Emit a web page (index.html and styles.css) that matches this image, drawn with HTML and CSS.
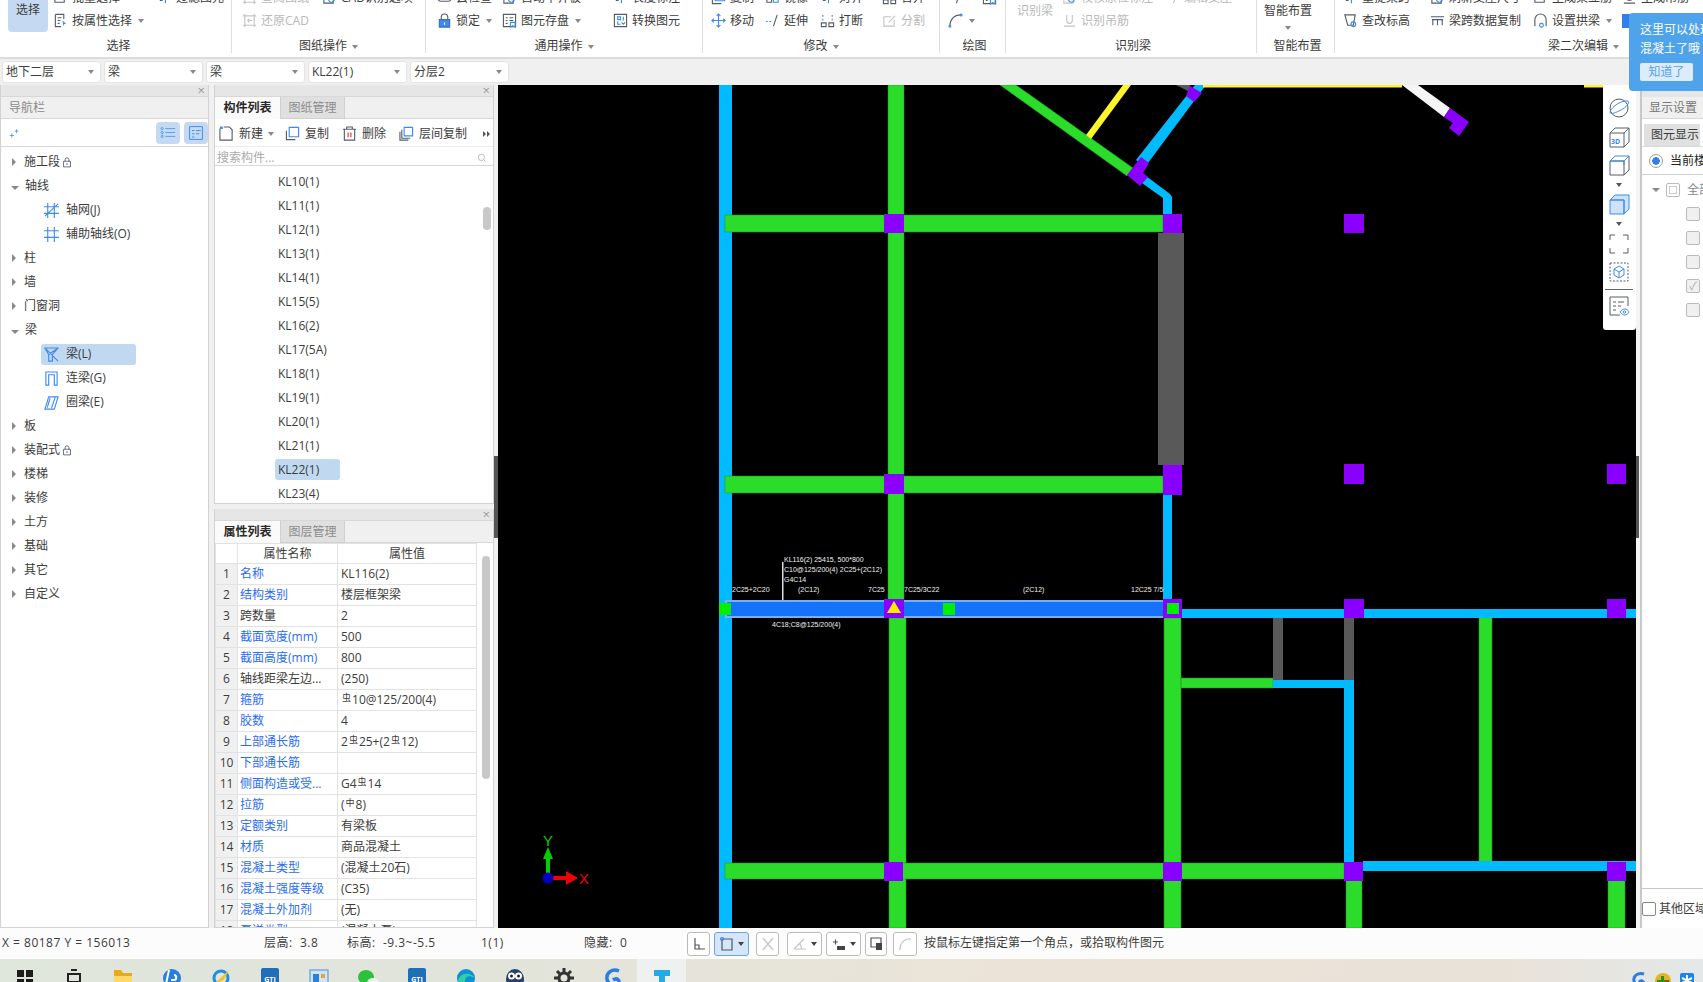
FILE: index.html
```html
<!DOCTYPE html>
<html lang="zh-CN">
  <head>
    <meta charset="UTF-8" />
    <title>梁二次编辑</title>
    <link rel="stylesheet" href="styles.css">
  </head>
  <body>
    <!-- iconos -->
    <svg class="defs" width="0" height="0">
      <symbol id="i-prop" viewBox="0 0 16 16"><path d="M2.5 1.5h9v5M2.5 1.5v13h6M5 5h4M5 8h3M5 11h2"/><path class="blue" d="M10 8l4 3.5-2 .3-.8 2.2z"/></symbol>
      <symbol id="i-batch" viewBox="0 0 16 16"><path d="M2 3h10v10H2z"/><path class="sb" d="M5 8l2 2 4-5"/></symbol>
      <symbol id="i-filter" viewBox="0 0 16 16"><path d="M3 3h3M3 7h3M3 11h3"/><path class="sb" d="M9 2v12"/></symbol>
      <symbol id="i-cad" viewBox="0 0 16 16"><path d="M3 1v14M13 1v14M1 3h14M1 13h14M8 6l-2 2 2 2M6 8h5"/></symbol>
      <symbol id="i-search" viewBox="0 0 16 16"><path d="M2 2h10v12H2z"/><circle class="sb" cx="10" cy="10" r="3"/></symbol>
      <symbol id="i-lock" viewBox="0 0 16 16"><path d="M4.5 7V4.5a3.5 3.5 0 0 1 7 0V7"/><path class="fillb" d="M2.5 7h11v8h-11z"/><path class="wh" d="M8 10v2.5"/></symbol>
      <symbol id="i-save" viewBox="0 0 16 16"><path d="M1.5 1.5h13v13h-13zM4 5h2M8 5h4M4 8h2M8 8h4M4 11h2"/><path class="sb" d="M9 10h5v5l-2.500-1.500L9 15z"/></symbol>
      <symbol id="i-conv" viewBox="0 0 16 16"><path d="M1.500 1.500h13v13h-13z"/><path class="sb" d="M5 4h3v3H5zM8 12H5V9M11 4v4M9 10l2 2 2-2"/></symbol>
      <symbol id="i-cloud" viewBox="0 0 16 16"><path d="M4 12a3 3 0 0 1 0-6 4 4 0 0 1 8 0 3 3 0 0 1 0 6z"/></symbol>
      <symbol id="i-move" viewBox="0 0 16 16"><path class="sb" d="M8 1v14M1 8h14M6 3l2-2 2 2M6 13l2 2 2-2M3 6L1 8l2 2M13 6l2 2-2 2"/></symbol>
      <symbol id="i-extend" viewBox="0 0 16 16"><path class="sb" stroke-dasharray="2 1.500" d="M1 9h7"/><path d="M9 14L13 2"/></symbol>
      <symbol id="i-break" viewBox="0 0 16 16"><path class="sb" d="M3 2v2M3 6v2M13 2v2M13 6v2"/><path d="M1.500 10.500h5v4h-5zM9.500 10.500h5v4h-5z"/></symbol>
      <symbol id="i-split" viewBox="0 0 16 16"><path d="M2 4h8M2 4v10h11V7M7 10l7-7"/></symbol>
      <symbol id="i-mirror" viewBox="0 0 16 16"><path d="M2 3h5v10H2z"/><path class="sb" d="M9 3h5v10H9z"/></symbol>
      <symbol id="i-arc" viewBox="0 0 16 16"><path d="M2 14C2 7 6 2 14 2"/><circle class="sb" cx="2" cy="14" r="1"/><circle class="sb" cx="14" cy="2" r="1"/></symbol>
      <symbol id="i-level" viewBox="0 0 16 16"><path d="M2 2h11l-2 11H5z"/><circle class="sb" cx="11" cy="12" r="2.500"/></symbol>
      <symbol id="i-span" viewBox="0 0 16 16"><path d="M1 4h14M2 7h12M3 7v6M8 7v6M13 7v6"/></symbol>
      <symbol id="i-arch" viewBox="0 0 16 16"><path d="M2 14V7a6 6 0 0 1 12 0v7"/><circle class="sb" cx="9" cy="13" r="2"/></symbol>
      <symbol id="i-hang" viewBox="0 0 16 16"><path d="M5 2v6a3 3 0 0 0 6 0V2M2 14h12"/></symbol>
      <symbol id="i-new" viewBox="0 0 16 16"><path d="M1 3v12h13V4l-3-3H5"/><path class="sb" d="M1 1h3M1 3l3-2M1 1l3 2"/></symbol>
      <symbol id="i-copy" viewBox="0 0 16 16"><path d="M1.500 5v9.500H11"/><path class="sb" d="M4.500 1.500h10v10h-10z"/></symbol>
      <symbol id="i-del" viewBox="0 0 16 16"><path d="M1 3.500h14M5 3.500V1h6v2.500M2.500 3.500v11.500h11V3.500"/><path class="red" d="M6.500 7v5M9.500 7v5"/></symbol>
      <symbol id="i-floors" viewBox="0 0 16 16"><path d="M1 6v9h9M3 4v9h9"/><path class="sb" d="M5.500 1.500h9v9h-9z"/></symbol>
      <symbol id="i-grid" viewBox="0 0 16 16"><path class="sb" d="M4 0v16M11 0v16M0 4h16M0 11h16"/></symbol>
      <symbol id="i-gridx" viewBox="0 0 16 16"><path class="sb" d="M4 0v16M11 0v16M0 4h16M0 11h16M1 14L15 1"/></symbol>
      <symbol id="i-beam" viewBox="0 0 16 16"><path class="sb" d="M1 1h14L9 8v7H5V8zM1 1l14 14M15 1L5 8"/></symbol>
      <symbol id="i-link" viewBox="0 0 16 16"><path class="sb" d="M2 15V1h12v14h-3V4H5v11z"/></symbol>
      <symbol id="i-ring" viewBox="0 0 16 16"><path class="sb" d="M1 15L5 2h10l-4 13zM3.500 13.500L6.500 3.500M8 14l4-12"/></symbol>
      <symbol id="i-lst" viewBox="0 0 24 20"><circle class="sb" cx="3" cy="4" r="1.700"/><circle class="sb" cx="3" cy="10" r="1.700"/><circle class="sb" cx="3" cy="16" r="1.700"/><path class="sb" d="M8 4h15M8 10h15M8 16h15"/></symbol>
      <symbol id="i-lst2" viewBox="0 0 20 20"><path class="sb" d="M2 2h16v16H2zM5 7h3M10 7h6M5 11h3M10 11h4M5 15h3"/></symbol>
      <symbol id="i-mag" viewBox="0 0 16 16"><circle cx="7" cy="7" r="5"/><path d="M11 11l3 3"/></symbol>
      <symbol id="i-padlock" viewBox="0 0 16 16"><path d="M5 6V3.500a3 3 0 0 1 6 0V6M2.500 6h11v9h-11zM8 9v3"/></symbol>
      <symbol id="t-orbit" viewBox="0 0 22 22"><circle cx="11" cy="11" r="9"/><path class="sb" d="M2 15C4 9 14 3 20 4c2 1-1 6-7 9S2 18 2 15z"/></symbol>
      <symbol id="t-3d" viewBox="0 0 22 22"><path d="M2 7h14v14H2zM2 7l5-5h14v14l-5 5M16 7l5-5"/><text class="t3d" x="3" y="18">3D</text></symbol>
      <symbol id="t-cube" viewBox="0 0 22 22"><path d="M2 7h14v14H2zM16 21l5-5V2"/><path class="sb" d="M2 7l5-5h14l-5 5zM16 7v4"/></symbol>
      <symbol id="t-cubef" viewBox="0 0 22 22"><path class="fillc" d="M2 7h14v14H2zM2 7l5-5h14v14l-5 5V7z"/></symbol>
      <symbol id="t-frame" viewBox="0 0 22 22"><path d="M2 7V2h5M15 2h5v5M20 15v5h-5M7 20H2v-5"/></symbol>
      <symbol id="t-hex" viewBox="0 0 22 22"><path stroke-dasharray="2 1.500" d="M2 2h18v18H2z"/><path class="sb" d="M11 5l5 3v6l-5 3-5-3V8zM6 8l5 3 5-3M11 11v6"/></symbol>
      <symbol id="t-eye" viewBox="0 0 22 22"><path d="M20 11V2H2v18h10M5 7h3M10 7h6M5 11h3M10 11h3M5 15h3"/><path class="sb" d="M12 17c3-4 7-4 9 0-2 4-6 4-9 0z"/><circle class="sb" cx="16.500" cy="17" r="1.200"/></symbol>
    </svg>

    <div class="ribbon">
      <div class="rib-group g-select">
        <div class="rib-body">
          <div class="rib-big active">选择</div>
          <div class="rib-item"><svg class="ic"><use href="#i-batch" /></svg>批量选择</div>
          <div class="rib-item"><svg class="ic"><use href="#i-filter" /></svg>过滤图元</div>
          <div class="rib-item g1-prop"><svg class="ic"><use href="#i-prop" /></svg>按属性选择<i class="caret"></i></div>
        </div>
        <div class="rib-label">选择</div>
      </div>
      <div class="rib-group g-cad">
        <div class="rib-body">
          <div class="rib-item off"><svg class="ic"><use href="#i-cad" /></svg>查阅图纸</div>
          <div class="rib-item"><svg class="ic"><use href="#i-search" /></svg>CAD识别选项</div>
          <div class="rib-item off"><svg class="ic"><use href="#i-cad" /></svg>还原CAD</div>
        </div>
        <div class="rib-label">图纸操作<i class="caret"></i></div>
      </div>
      <div class="rib-group g-common">
        <div class="rib-body">
          <div class="rib-item"><svg class="ic"><use href="#i-cloud" /></svg>云检查</div>
          <div class="rib-item"><svg class="ic"><use href="#i-search" /></svg>自动平齐板</div>
          <div class="rib-item"><svg class="ic"><use href="#i-filter" /></svg>长度标注</div>
          <div class="rib-item"><svg class="ic"><use href="#i-lock" /></svg>锁定<i class="caret"></i></div>
          <div class="rib-item"><svg class="ic"><use href="#i-save" /></svg>图元存盘<i class="caret"></i></div>
          <div class="rib-item"><svg class="ic"><use href="#i-conv" /></svg>转换图元</div>
        </div>
        <div class="rib-label">通用操作<i class="caret"></i></div>
      </div>
      <div class="rib-group g-edit">
        <div class="rib-body">
          <div class="rib-item"><svg class="ic"><use href="#i-copy" /></svg>复制</div>
          <div class="rib-item"><svg class="ic"><use href="#i-mirror" /></svg>镜像</div>
          <div class="rib-item"><svg class="ic"><use href="#i-filter" /></svg>对齐</div>
          <div class="rib-item"><svg class="ic"><use href="#i-break" /></svg>合并</div>
          <div class="rib-item"><svg class="ic"><use href="#i-move" /></svg>移动</div>
          <div class="rib-item"><svg class="ic"><use href="#i-extend" /></svg>延伸</div>
          <div class="rib-item"><svg class="ic"><use href="#i-break" /></svg>打断</div>
          <div class="rib-item off"><svg class="ic"><use href="#i-split" /></svg>分割</div>
        </div>
        <div class="rib-label">修改<i class="caret"></i></div>
      </div>
      <div class="rib-group g-draw">
        <div class="rib-body">
          <div class="rib-item"><svg class="ic"><use href="#i-extend" /></svg></div>
          <div class="rib-item"><svg class="ic"><use href="#i-save" /></svg></div>
          <div class="rib-item"><svg class="ic"><use href="#i-arc" /></svg><i class="caret"></i></div>
        </div>
        <div class="rib-label">绘图</div>
      </div>
      <div class="rib-group g-recog">
        <div class="rib-body">
          <div class="rib-big off">识别梁</div>
          <div class="rib-item off"><svg class="ic"><use href="#i-search" /></svg>校核原位标注</div>
          <div class="rib-item off"><svg class="ic"><use href="#i-extend" /></svg>编辑支座</div>
          <div class="rib-item off g6-hang"><svg class="ic"><use href="#i-hang" /></svg>识别吊筋</div>
        </div>
        <div class="rib-label">识别梁</div>
      </div>
      <div class="rib-group g-smart">
        <div class="rib-body">
          <div class="rib-big smart">智能布置<i class="caret"></i></div>
        </div>
        <div class="rib-label">智能布置</div>
      </div>
      <div class="rib-group g-second">
        <div class="rib-body">
          <div class="rib-item"><svg class="ic"><use href="#i-filter" /></svg>重提梁跨</div>
          <div class="rib-item"><svg class="ic"><use href="#i-search" /></svg>刷新支座尺寸</div>
          <div class="rib-item"><svg class="ic"><use href="#i-batch" /></svg>生成架立筋</div>
          <div class="rib-item"><svg class="ic"><use href="#i-hang" /></svg>生成吊筋</div>
          <div class="rib-item"><svg class="ic"><use href="#i-level" /></svg>查改标高</div>
          <div class="rib-item"><svg class="ic"><use href="#i-span" /></svg>梁跨数据复制</div>
          <div class="rib-item"><svg class="ic"><use href="#i-arch" /></svg>设置拱梁<i class="caret"></i></div>
          <div class="rib-item"><span class="rib-check"></span></div>
        </div>
        <div class="rib-label">梁二次编辑<i class="caret"></i></div>
      </div>
    </div>

    <div class="combos">
      <div class="combo">地下二层<i class="caret"></i></div>
      <div class="combo">梁<i class="caret"></i></div>
      <div class="combo">梁<i class="caret"></i></div>
      <div class="combo">KL22(1)<i class="caret"></i></div>
      <div class="combo">分层2<i class="caret"></i></div>
    </div>

    <div class="main">
      <!-- navegacion -->
      <div class="nav">
        <div class="close-bar"><span class="close">×</span></div>
        <div class="nav-title">导航栏</div>
        <div class="nav-tools">
          <svg class="ic pin" viewBox="0 0 16 16"><path class="sb" d="M1 12h7M4.500 8.500v7M9 5h6M12 2v6" /></svg>
          <span class="nav-btn first"><svg class="ic-lst"><use href="#i-lst" /></svg></span>
          <span class="nav-btn"><svg class="ic-lst2"><use href="#i-lst2" /></svg></span>
        </div>
        <ul class="tree">
          <li><i class="tri"></i>施工段<svg class="ic-lock"><use href="#i-padlock" /></svg></li>
          <li><i class="tri down"></i>轴线</li>
          <li class="sub"><svg class="ic"><use href="#i-gridx" /></svg>轴网(J)</li>
          <li class="sub"><svg class="ic"><use href="#i-grid" /></svg>辅助轴线(O)</li>
          <li><i class="tri"></i>柱</li>
          <li><i class="tri"></i>墙</li>
          <li><i class="tri"></i>门窗洞</li>
          <li><i class="tri down"></i>梁</li>
          <li class="sub"><span class="sub-on"><svg class="ic"><use href="#i-beam" /></svg>梁(L)</span></li>
          <li class="sub"><svg class="ic"><use href="#i-link" /></svg>连梁(G)</li>
          <li class="sub"><svg class="ic"><use href="#i-ring" /></svg>圈梁(E)</li>
          <li><i class="tri"></i>板</li>
          <li><i class="tri"></i>装配式<svg class="ic-lock"><use href="#i-padlock" /></svg></li>
          <li><i class="tri"></i>楼梯</li>
          <li><i class="tri"></i>装修</li>
          <li><i class="tri"></i>土方</li>
          <li><i class="tri"></i>基础</li>
          <li><i class="tri"></i>其它</li>
          <li><i class="tri"></i>自定义</li>
        </ul>
      </div>

      <div class="mid">
        <!-- lista de componentes -->
        <div class="panel panel-list">
          <div class="close-bar"><span class="close">×</span></div>
          <div class="tabs">
            <div class="tab on">构件列表</div>
            <div class="tab">图纸管理</div>
          </div>
          <div class="list-tools">
            <span class="tool tool-new"><svg class="ic"><use href="#i-new" /></svg>新建<i class="caret"></i></span>
            <span class="tool tool-copy"><svg class="ic"><use href="#i-copy" /></svg>复制</span>
            <span class="tool tool-del"><svg class="ic"><use href="#i-del" /></svg>删除</span>
            <span class="tool tool-floor"><svg class="ic"><use href="#i-floors" /></svg>层间复制</span>
            <span class="tool-more"><i class="tri-more"></i><i class="tri-more"></i></span>
          </div>
          <div class="search">搜索构件...<svg class="ic-mag"><use href="#i-mag" /></svg></div>
          <ul class="list">
            <li><span>KL10(1)</span></li>
            <li><span>KL11(1)</span></li>
            <li><span>KL12(1)</span></li>
            <li><span>KL13(1)</span></li>
            <li><span>KL14(1)</span></li>
            <li><span>KL15(5)</span></li>
            <li><span>KL16(2)</span></li>
            <li><span>KL17(5A)</span></li>
            <li><span>KL18(1)</span></li>
            <li><span>KL19(1)</span></li>
            <li><span>KL20(1)</span></li>
            <li><span>KL21(1)</span></li>
            <li class="on"><span>KL22(1)</span></li>
            <li><span>KL23(4)</span></li>
          </ul>
          <div class="thumb thumb-list"></div>
        </div>

        <!-- propiedades -->
        <div class="panel panel-props">
          <div class="close-bar"><span class="close">×</span></div>
          <div class="tabs">
            <div class="tab on">属性列表</div>
            <div class="tab">图层管理</div>
          </div>
          <table class="props">
            <colgroup><col class="c-n" /><col class="c-k" /><col class="c-v" /></colgroup>
            <tr><th></th><th>属性名称</th><th>属性值</th></tr>
            <tr><th>1</th><td class="lnk">名称</td><td>KL116(2)</td></tr>
            <tr><th>2</th><td class="lnk">结构类别</td><td>楼层框架梁</td></tr>
            <tr><th>3</th><td>跨数量</td><td>2</td></tr>
            <tr><th>4</th><td class="lnk">截面宽度(mm)</td><td>500</td></tr>
            <tr><th>5</th><td class="lnk">截面高度(mm)</td><td>800</td></tr>
            <tr><th>6</th><td>轴线距梁左边...</td><td>(250)</td></tr>
            <tr><th>7</th><td class="lnk">箍筋</td><td><span class="rb">虫</span>10@125/200(4)</td></tr>
            <tr><th>8</th><td class="lnk">胶数</td><td>4</td></tr>
            <tr><th>9</th><td class="lnk">上部通长筋</td><td>2<span class="rb">虫</span>25+(2<span class="rb">虫</span>12)</td></tr>
            <tr><th>10</th><td class="lnk">下部通长筋</td><td></td></tr>
            <tr><th>11</th><td class="lnk">侧面构造或受...</td><td>G4<span class="rb">虫</span>14</td></tr>
            <tr><th>12</th><td class="lnk">拉筋</td><td>(<span class="rb">中</span>8)</td></tr>
            <tr><th>13</th><td class="lnk">定额类别</td><td>有梁板</td></tr>
            <tr><th>14</th><td class="lnk">材质</td><td>商品混凝土</td></tr>
            <tr><th>15</th><td class="lnk">混凝土类型</td><td>(混凝土20石)</td></tr>
            <tr><th>16</th><td class="lnk">混凝土强度等级</td><td>(C35)</td></tr>
            <tr><th>17</th><td class="lnk">混凝土外加剂</td><td>(无)</td></tr>
            <tr><th>18</th><td class="lnk">泵送类型</td><td>(混凝土泵)</td></tr>
          </table>
          <div class="thumb thumb-props"></div>
        </div>
      </div>

      <div class="split"><i class="split-handle"></i></div>

      <!-- plano -->
      <div class="canvas">
        <svg class="plan" viewBox="498 85 1138 843" width="1138" height="843">
          <rect x="498" y="85" width="1138" height="843" fill="#000" />
          <rect class="sky" x="719" y="85" width="13" height="843" />
          <path class="gn" d="M888 85h16v515h-16zM889 618h17v310h-17z" />
          <path class="gn" d="M725 215h438v17H725zM725 476h438v17H725zM725 863h619v16H725z" />
          <path class="gn" d="M1164 618h17v310h-17zM1181 678h92v10h-92zM1479 614h13v252h-13zM1346 879h16v49h-16zM1608 879h17v49h-17z" />
          <path class="sky" d="M1163 197h9v403h-9zM1182 609h454v9h-454zM1273 680h81v8h-81zM1344 688h10v174h-10zM1363 861h273v10h-273z" />
          <path class="gy" d="M1158 233h26v232h-26zM1273 618h10v62h-10zM1344 618h10v62h-10z" />
          <polygon class="gy" points="1176,85 1190,85 1190,92" />
          <!-- diagonales -->
          <polygon class="gn" points="1000,85 1016,85 1133,168 1127,176" />
          <polygon class="yl" points="1123,85 1131,85 1091,139 1086,135" />
          <polygon class="sky" points="1195,85 1206,85 1145,167 1136,160" />
          <polygon class="sky" points="1146,176 1170,194 1172,197 1172,205 1163,205 1163,198 1142,183" />
          <polygon points="1402,85 1418,85 1450,108 1444,117" fill="#f5f5f5" />
          <rect class="yl" x="1203" y="85" width="199" height="2.500" />
          <rect class="yl" x="1584" y="85" width="19" height="2.500" />
          <!-- nudos -->
          <polygon class="pu" points="1141,157 1149,163 1143,173 1148,177 1140,186 1127,175" />
          <polygon class="pu" points="1190,86 1202,93 1194,102 1186,96" />
          <polygon class="pu" points="1450,108 1469,122 1459,136 1449,128 1453,123 1444,117" />
          <path class="pu" d="M884 214h20v19h-20zM1163 214h19v19h-19zM1344 214h20v19h-20zM884 474h20v20h-20zM1163 465h19v30h-19zM1344 464h20v20h-20zM1607 464h19v20h-19zM1344 599h20v19h-20zM1607 599h19v19h-19zM884 862h19v19h-19zM1163 862h19v19h-19zM1344 862h19v19h-19zM1607 862h19v19h-19z" />
          <!-- viga seleccionada -->
          <rect x="726" y="601" width="438" height="16" fill="#1472fc" stroke="#79aef8" stroke-width="2" />
          <rect class="pu" x="884" y="599" width="20" height="19" />
          <rect class="pu" x="1163" y="599" width="19" height="19" />
          <polygon points="894,601 901,613 887,613" fill="#ffea00" />
          <path class="lime" d="M719 603h12v12h-12zM943 603h12v12h-12zM1167 603h12v11h-12z" />
          <rect x="782" y="562" width="1.500" height="38" fill="#ddd" />
          <g class="cad">
            <text x="784" y="562">KL116(2) 25415, 500*800</text>
            <text x="784" y="572">C10@125/200(4) 2C25+(2C12)</text>
            <text x="784" y="582">G4C14</text>
            <text x="732" y="592">2C25+2C20</text>
            <text x="798" y="592">(2C12)</text>
            <text x="868" y="592">7C25</text>
            <text x="904" y="592">7C25/3C22</text>
            <text x="1023" y="592">(2C12)</text>
            <text x="1131" y="592">12C25 7/5</text>
            <text x="772" y="627">4C18;C8@125/200(4)</text>
          </g>
          <!-- ejes -->
          <path d="M546 876v-17h-3l5-12 5 12h-3v17z" fill="#00d000" />
          <path d="M550 876h16v-5l12 7-12 7v-5h-16z" fill="#f00000" />
          <circle cx="548" cy="878" r="5.500" fill="#0000c0" />
          <text class="axis-y" x="548" y="846">Y</text>
          <text class="axis-x" x="579" y="884">X</text>
        </svg>
        <div class="float-tools">
          <svg class="ic-t"><use href="#t-orbit" /></svg>
          <svg class="ic-t"><use href="#t-3d" /></svg>
          <svg class="ic-t"><use href="#t-cube" /></svg>
          <i class="caret"></i>
          <svg class="ic-t"><use href="#t-cubef" /></svg>
          <i class="caret"></i>
          <svg class="ic-t"><use href="#t-frame" /></svg>
          <svg class="ic-t"><use href="#t-hex" /></svg>
          <span class="float-sep"></span>
          <svg class="ic-t"><use href="#t-eye" /></svg>
        </div>
      </div>

      <div class="split white"><i class="split-handle"></i></div>

      <!-- visualizacion -->
      <div class="display">
        <div class="display-top"></div>
        <div class="display-title">显示设置</div>
        <div class="display-tab">图元显示</div>
        <div class="display-radio"><span class="radio"></span>当前楼层</div>
        <div class="display-tree">
          <div class="dt-row"><i class="tri down"></i><span class="chk dbl"></span><span class="dt-all">全部</span></div>
          <div class="dt-row item"><span class="chk"></span></div>
          <div class="dt-row item"><span class="chk"></span></div>
          <div class="dt-row item"><span class="chk"></span></div>
          <div class="dt-row item"><span class="chk tick">✓</span></div>
          <div class="dt-row item"><span class="chk"></span></div>
        </div>
        <div class="display-bottom"><span class="chk big"></span>其他区域</div>
      </div>
    </div>

    <div class="status">
      <span class="st st-xy">X = 80187 Y = 156013</span>
      <span class="st st-h">层高:&nbsp;&nbsp;3.8</span>
      <span class="st st-e">标高:&nbsp;&nbsp;-9.3~-5.5</span>
      <span class="st st-c">1(1)</span>
      <span class="st st-c">隐藏:&nbsp;&nbsp;0</span>
      <span class="st-btn w23"><svg class="ic-s" viewBox="0 0 16 16"><path d="M4 2v11h10M4 9h4v4" /></svg></span>
      <span class="st-btn w35 mr7 on"><svg class="ic-s" viewBox="0 0 16 16"><path d="M3 3h10v11H3z" /><circle class="sb" cx="3" cy="3" r="1.500" /></svg><i class="caret"></i></span>
      <span class="st-btn w23 mr8"><svg class="ic-s off" viewBox="0 0 16 16"><path d="M3 2l10 12M13 2L3 14" /></svg></span>
      <span class="st-btn w35"><svg class="ic-s off" viewBox="0 0 16 16"><path d="M2 13h12M2 13l10-10M8 8l2 5" /></svg><i class="caret"></i></span>
      <span class="st-btn w35"><svg class="ic-s" viewBox="0 0 16 16"><path d="M2 6h5M4.500 3.500v5" /><path class="fillk" d="M6 10h8v4H6z" /></svg><i class="caret"></i></span>
      <span class="st-btn w22 mr6"><svg class="ic-s" viewBox="0 0 16 16"><path d="M3 2h10v9H3z" /><path class="fillk" d="M8 7h6v7H8z" /></svg></span>
      <span class="st-btn w24"><svg class="ic-s off" viewBox="0 0 16 16"><path d="M3 14C3 8 6 4 11 3M11 3h3M3 14v-3" /></svg></span>
      <span class="st-hint">按鼠标左键指定第一个角点，或拾取构件图元</span>
    </div>

    <div class="taskbar">
      <span class="task"><svg class="ti" viewBox="0 0 22 22"><path fill="#1d1d1d" d="M3 3h7v7H3zM12 3h7v7h-7zM3 12h7v7H3zM12 12h7v7h-7z" /></svg></span>
      <span class="task"><svg class="ti" viewBox="0 0 22 22"><path fill="none" stroke="#222" stroke-width="2" d="M5 7h12v8H5zM8 3h6M8 19h6" /></svg></span>
      <span class="task"><svg class="ti" viewBox="0 0 22 22"><path fill="#e8a91c" d="M2 3h7l2 3h9v4H2z" /><path fill="#ffd76a" d="M2 9h18v11H2z" /></svg></span>
      <span class="task"><svg class="ti" viewBox="0 0 22 22"><circle cx="11" cy="11" r="9" fill="#2a7ee0" /><path fill="none" stroke="#fff" stroke-width="2" d="M8 3L5 17M13 8c3 0 3 5 0 5h-3" /></svg></span>
      <span class="task"><svg class="ti" viewBox="0 0 22 22"><circle cx="11" cy="11" r="7" fill="none" stroke="#1c8fe8" stroke-width="3" /><path fill="#f7c02e" d="M3 18L19 3l-5 10z" /></svg></span>
      <span class="task"><svg class="ti" viewBox="0 0 22 22"><rect x="2" y="1" width="18" height="21" rx="2" fill="#1f6fb8" /><text class="ti-t" x="11" y="15">GTJ</text></svg></span>
      <span class="task"><svg class="ti" viewBox="0 0 22 22"><rect x="2" y="3" width="18" height="17" fill="#cfe4f7" stroke="#5d9fd8" /><rect x="5" y="7" width="6" height="8" fill="#2a7ee0" /><rect x="13" y="7" width="4" height="4" fill="#f0a030" /></svg></span>
      <span class="task"><svg class="ti" viewBox="0 0 22 22"><ellipse cx="9" cy="10" rx="8" ry="7" fill="#2cc13b" /><ellipse cx="16" cy="16" rx="6" ry="5" fill="#f1f1f1" /></svg></span>
      <span class="task"><svg class="ti" viewBox="0 0 22 22"><rect x="2" y="1" width="18" height="21" rx="2" fill="#1f6fb8" /><text class="ti-t" x="11" y="15">GTJ</text></svg></span>
      <span class="task"><svg class="ti" viewBox="0 0 22 22"><circle cx="11" cy="11" r="9" fill="#0f8fd8" /><path fill="#2fd0a0" d="M3 13c3-8 13-8 17-2-6-3-10-2-10 4 0 3 3 5 6 4-6 3-12-1-13-6z" /></svg></span>
      <span class="task"><svg class="ti" viewBox="0 0 22 22"><ellipse cx="11" cy="12" rx="9" ry="10" fill="#26406b" /><circle cx="7.500" cy="9" r="3.500" fill="#fff" /><circle cx="14.500" cy="9" r="3.500" fill="#fff" /><circle cx="7.500" cy="9" r="1.500" fill="#222" /><circle cx="14.500" cy="9" r="1.500" fill="#222" /></svg></span>
      <span class="task"><svg class="ti" viewBox="0 0 22 22"><circle cx="11" cy="11" r="5" fill="none" stroke="#333" stroke-width="3" /><path stroke="#333" stroke-width="3" d="M11 1v4M11 17v4M1 11h4M17 11h4M4 4l3 3M15 15l3 3M18 4l-3 3M4 18l3-3" /></svg></span>
      <span class="task"><svg class="ti" viewBox="0 0 22 22"><path fill="none" stroke="#2a7ee0" stroke-width="3.500" d="M17 4C10 1 4 6 5 12s8 8 11 5-1-7-5-4" /></svg></span>
      <span class="task on"><svg class="ti" viewBox="0 0 22 22"><path fill="#27a9e6" d="M3 3h16v6h-5v13H8V9H3z" /></svg></span>
      <span class="tray">
        <svg class="ti" viewBox="0 0 18 18"><path fill="none" stroke="#2a7ee0" stroke-width="3" d="M14 3C8 1 3 5 4 10s7 6 9 4-1-6-4-3" /></svg>
        <svg class="ti" viewBox="0 0 18 18"><circle cx="9" cy="10" r="8" fill="#e0b820" /><path fill="#2c8c30" d="M3 9h12v3H3zM7 5h3v10H7z" /><circle cx="13" cy="14" r="4" fill="#e02a20" /></svg>
        <svg class="ti" viewBox="0 0 18 18"><rect x="2" y="2" width="14" height="16" rx="2" fill="#1b86e8" /><path stroke="#fff" stroke-width="2" d="M9 4v10M4 7l10 5M14 7L4 12" /></svg>
      </span>
    </div>

    <div class="tip">
      <p>这里可以处理</p>
      <p>混凝土了哦</p>
      <span class="tip-btn">知道了</span>
    </div>
  </body>
</html>
```

FILE: styles.css
```css
* {
  box-sizing: border-box;
}
html,
body {
  margin: 0;
  height: 982px;
  overflow: hidden;
}
body {
  position: relative;
  width: 1703px;
  font-family: "Open Sans", "Noto Sans CJK SC", sans-serif;
  font-size: 12px;
  line-height: 18px;
  color: #3c3c3c;
  background: #f0f0f0;
}
ul {
  list-style: none;
  margin: 0;
  padding: 0;
}
.defs {
  position: absolute;
}
svg {
  fill: none;
  stroke: #555d6b;
  stroke-width: 1.2;
}
.sb {
  stroke: #3d8bf0;
}
.blue {
  fill: #3d8bf0;
  stroke: none;
}
.fillb {
  fill: #3d8bf0;
  stroke: #3d6fa8;
}
.fillc {
  fill: #cfe2fb;
  stroke: #3d8bf0;
}
.fillk {
  fill: #444;
  stroke: none;
}
.wh {
  stroke: #fff;
}
.red {
  stroke: #e03030;
}
.t3d {
  font-size: 7px;
  font-weight: 700;
  fill: #3d8bf0;
  stroke: none;
}

/* cinta superior */
.ribbon {
  display: flex;
  height: 59px;
  overflow: hidden;
  background: #fff;
  border-bottom: 2px solid #dcdcdc;
}
.rib-group {
  flex: none;
  height: 53px;
  border-right: 1px solid #dedede;
}
.g-select { width: 232px; }
.g-cad { width: 194px; }
.g-common { width: 277px; }
.g-edit { width: 237px; }
.g-draw { width: 66px; }
.g-recog { width: 251px; }
.g-smart { width: 78px; }
.g-second { flex: 1; border-right: none; }
.rib-body {
  display: grid;
  grid-template-rows: 23px 23px;
  margin-top: -14px;
  height: 46px;
  white-space: nowrap;
}
.g-select .rib-body { grid-template-columns: 45px 104px 1fr; padding-left: 8px; }
.g-select .rib-label { padding-left: 6px; }
.g-cad .rib-body { grid-template-columns: 80px 1fr; padding-left: 10px; }
.g-common .rib-body { grid-template-columns: 65px 111px 1fr; padding-left: 11px; }
.g-edit .rib-body { grid-template-columns: 54px 55px 62px 1fr; padding-left: 8px; }
.g-draw .rib-body { grid-template-columns: 34px 1fr; padding-left: 8px; }
.g-draw .rib-label { padding-left: 4px; }
.g-recog .rib-body { grid-template-columns: 45px 103px 1fr; padding-left: 11px; }
.g-recog .rib-label { padding-left: 4px; }
.g-smart .rib-body { grid-template-columns: 48px; padding-left: 7px; }
.g-smart .rib-label { padding-left: 4px; }
.g-second .rib-body { grid-template-columns: 87px 103px 89px 1fr; padding-left: 8px; }
.g-second .rib-label { padding-left: 213px; padding-right: 84px; }
.g1-prop { grid-column: 2; }
.g6-hang { grid-column: 2; }
.rib-big {
  grid-row: 1 / 3;
  display: flex;
  align-items: center;
  justify-content: center;
  padding-top: 2px;
}
.rib-big.active {
  width: 40px;
  background: #c5daf2;
  border-radius: 4px;
}
.rib-big.off {
  justify-content: flex-start;
  padding-top: 4px;
}
.rib-big.smart {
  grid-row: 1 / 4;
  flex-direction: column;
  justify-content: flex-start;
  height: 46px;
  padding-top: 16px;
}
.rib-big.smart .caret {
  margin: 6px 0 0;
}
.rib-item {
  display: flex;
  align-items: center;
  gap: 4px;
}
.rib-item .caret {
  margin-left: 2px;
}
.off {
  color: #b8b8b8;
}
.off svg,
svg.off {
  stroke: #c4c4c4;
}
.off .sb {
  stroke: #c4c4c4;
}
.ic {
  flex: none;
  width: 15px;
  height: 15px;
}
.rib-label {
  margin-top: 5px;
  height: 17px;
  line-height: 17px;
  text-align: center;
}
.rib-check {
  display: block;
  width: 12px;
  height: 14px;
  background: #2f80e8;
}
.caret {
  display: inline-block;
  flex: none;
  width: 0;
  height: 0;
  margin-left: 5px;
  vertical-align: middle;
  border-left: 3px solid transparent;
  border-right: 3px solid transparent;
  border-top: 4px solid #888;
}

/* combos */
.combos {
  display: flex;
  gap: 3px;
  height: 26px;
  padding: 2px 2px 0;
}
.combo {
  display: flex;
  align-items: center;
  justify-content: space-between;
  width: 99px;
  height: 22px;
  padding: 0 6px 0 3px;
  background: #fff;
  border: 1px solid #e4e4e4;
  border-radius: 3px;
}

.main {
  display: flex;
  height: 843px;
}

/* navegacion */
.nav {
  flex: none;
  width: 209px;
  background: #fff;
  border: 1px solid #d2d2d2;
  border-top: none;
}
.close-bar {
  height: 12px;
  line-height: 11px;
  padding-right: 3px;
  text-align: right;
  background: #e6e6e6;
  border-bottom: 1px solid #d8d8d8;
}
.close {
  color: #999;
  font-size: 13px;
}
.nav-title {
  height: 22px;
  line-height: 21px;
  padding-left: 8px;
  color: #8a8a8a;
  background: #f0f0f0;
  border-bottom: 1px solid #d8d8d8;
}
.nav-tools {
  display: flex;
  align-items: center;
  height: 28px;
  padding-left: 8px;
  border-bottom: 1px solid #d8d8d8;
}
.pin {
  margin-right: auto;
  width: 10px;
  height: 10px;
  overflow: visible;
}
.nav-btn {
  display: flex;
  align-items: center;
  justify-content: center;
  width: 24px;
  height: 22px;
  background: #c5daf2;
  border-radius: 4px;
}
.nav-btn.first {
  margin-right: 4px;
}
.ic-lst {
  width: 16px;
  height: 13px;
}
.ic-lst2 {
  width: 16px;
  height: 16px;
}
.tree {
  padding-top: 3px;
}
.tree li {
  display: flex;
  align-items: center;
  height: 24px;
  padding-left: 11px;
}
.tri {
  flex: none;
  width: 0;
  height: 0;
  margin-right: 7px;
  border-top: 4px solid transparent;
  border-bottom: 4px solid transparent;
  border-left: 4px solid #888;
  border-right: 1px solid transparent;
}
.tri.down {
  margin-left: -1px;
  margin-top: 3px;
  margin-right: 6px;
  border-left: 4px solid transparent;
  border-right: 4px solid transparent;
  border-top: 4px solid #888;
  border-bottom: none;
}
.tree li.sub {
  gap: 7px;
  padding-left: 43px;
}
.sub-on {
  display: flex;
  align-items: center;
  gap: 7px;
  width: 95px;
  height: 21px;
  margin-left: -3px;
  padding-left: 3px;
  background: #c1d8f1;
  border-radius: 3px;
}
.ic-lock {
  width: 10px;
  height: 11px;
  margin-left: 2px;
  stroke-width: 1.400;
}

.mid {
  flex: none;
  width: 280px;
  margin-left: 5px;
}
.panel {
  position: relative;
  overflow: hidden;
  background: #fff;
  border: 1px solid #d2d2d2;
  border-top: none;
}
.panel-list {
  height: 419px;
}
.panel-props {
  height: 419px;
  margin-top: 5px;
}
.tabs {
  display: flex;
  height: 22px;
  background: #f0f0f0;
  border-bottom: 1px solid #d8d8d8;
}
.tab {
  width: 65px;
  height: 22px;
  line-height: 22px;
  text-align: center;
  color: #8c8c8c;
  background: #e0e0e0;
  border: 1px solid #d0d0d0;
  border-top: none;
}
.tab.on {
  color: #2a2a2a;
  font-weight: 700;
  background: #fafafa;
  border: none;
}
.list-tools {
  display: flex;
  align-items: center;
  height: 28px;
  padding-top: 2px;
  border-bottom: 1px solid #ececec;
}
.tool {
  display: flex;
  align-items: center;
  flex: none;
  gap: 5px;
}
.tool .caret {
  margin-left: 0;
}
.tool-new { width: 70px; padding-left: 4px; }
.tool-copy { width: 57px; }
.tool-del { width: 57px; }
.tool-floor { width: 82px; }
.tool-more {
  display: flex;
  align-items: center;
  justify-content: center;
  gap: 1px;
  width: 10px;
  height: 20px;
}
.tri-more {
  width: 0;
  height: 0;
  border-top: 3px solid transparent;
  border-bottom: 3px solid transparent;
  border-left: 3px solid #555;
}
.search {
  display: flex;
  align-items: center;
  justify-content: space-between;
  height: 19px;
  padding: 3px 6px 0 2px;
  color: #aaa;
  border-bottom: 1px solid #d8d8d8;
}
.ic-mag {
  width: 10px;
  height: 10px;
  stroke: #aaa;
}
.list {
  padding: 4px 0 0 60px;
}
.list li {
  height: 24px;
  line-height: 21px;
  padding-top: 1px;
}
.list span {
  display: block;
  width: 65px;
  height: 21px;
  padding-left: 3px;
  border-radius: 3px;
}
.list .on span {
  background: #c1d8f1;
}
.thumb {
  position: absolute;
  width: 8px;
  background: #c8c8c8;
  border-radius: 4px;
}
.thumb-list {
  left: 268px;
  top: 122px;
  height: 23px;
}
.thumb-props {
  left: 267px;
  top: 47px;
  height: 223px;
}
.props {
  border-collapse: collapse;
  table-layout: fixed;
  width: 261px;
}
.c-n { width: 22px; }
.c-k { width: 100px; }
.c-v { width: 139px; }
.props tr {
  height: 21px;
}
.props tr:first-child {
  height: 20px;
}
.props tr:last-child th,
.props tr:last-child td {
  line-height: 12px;
}
.props th,
.props td {
  padding: 0 2px;
  font-weight: 400;
  white-space: nowrap;
  overflow: hidden;
  border: 1px solid #e2e2e2;
}
.props th {
  padding: 0;
  text-align: center;
  background: #f0f0f0;
}
.props tr:first-child th {
  background: #fff;
}
.props td:last-child {
  padding-left: 3px;
}
.lnk {
  color: #2a6cf0;
}
.rb {
  position: relative;
  top: -3px;
  font-size: 9px;
  margin: 0 1px;
}

.split {
  position: relative;
  flex: none;
  width: 4px;
}
.split.white {
  width: 4px;
  background: #f4f4f4;
}
.split-handle {
  position: absolute;
  left: 0;
  top: 371px;
  width: 4px;
  height: 82px;
  background: #555;
}
.split.white .split-handle {
  width: 3px;
}

/* plano */
.canvas {
  position: relative;
  flex: none;
  width: 1138px;
  height: 843px;
  background: #000;
  overflow: hidden;
}
.plan {
  display: block;
  stroke: none;
}
.gn { fill: #2bdc2b; stroke: #1f9a1f; stroke-width: .5; }
.sky { fill: #00bbff; }
.gy { fill: #595959; }
.yl { fill: #fff52a; }
.pu { fill: #8a00ff; }
.lime { fill: #00f000; }
.cad text {
  font-family: "Liberation Sans", sans-serif;
  font-size: 7px;
  fill: #f0f0f0;
}
.axis-y,
.axis-x {
  font-family: "Liberation Sans", sans-serif;
  font-size: 15px;
  text-anchor: middle;
}
.axis-y {
  fill: #00d000;
}
.axis-x {
  fill: #f00000;
  text-anchor: start;
}
.float-tools {
  position: absolute;
  top: 0;
  right: 0;
  display: flex;
  flex-direction: column;
  align-items: center;
  gap: 6.600px;
  width: 33px;
  height: 245px;
  padding: 12px 2px 0 0;
  background: #fff;
  border-radius: 0 0 3px 3px;
}
.float-tools .caret {
  margin: 0;
  border-top-color: #555;
}
.ic-t {
  flex: none;
  width: 22px;
  height: 22px;
  stroke-width: 1;
}
.float-sep {
  flex: none;
  width: 28px;
  height: 1px;
  background: #666;
  margin: -1px 0;
}

/* visualizacion */
.display {
  flex: 1;
  overflow: hidden;
  white-space: nowrap;
  background: #fff;
  border-left: 2px solid #c8c8c8;
}
.display-top {
  height: 12px;
  background: #e6e6e6;
}
.display-title {
  height: 22px;
  line-height: 22px;
  padding-left: 7px;
  color: #777;
  background: #f0f0f0;
  border-bottom: 1px solid #d8d8d8;
}
.display-tab {
  width: 56px;
  height: 22px;
  line-height: 22px;
  margin: 5px 0 0 2px;
  padding-left: 7px;
  background: #e0e0e0;
}
.display-radio {
  display: flex;
  align-items: center;
  gap: 7px;
  height: 29px;
  padding-left: 7px;
  color: #222;
  border-top: 1px solid #d8d8d8;
  border-bottom: 1px solid #d0d0d0;
}
.radio {
  flex: none;
  width: 14px;
  height: 14px;
  border: 1px solid #999;
  border-radius: 50%;
  background: radial-gradient(circle, #2f80e8 0 3.500px, #fff 4px);
}
.display-tree {
  height: 713px;
  padding-top: 3px;
}
.dt-row {
  display: flex;
  align-items: center;
  height: 24px;
  padding-left: 10px;
}
.dt-row .tri.down {
  margin: 0 6px 0 0;
}
.dt-row.item {
  padding-left: 44px;
}
.dt-all {
  margin-left: 7px;
  color: #888;
}
.chk {
  flex: none;
  display: inline-block;
  width: 14px;
  height: 14px;
  line-height: 12px;
  font-size: 11px;
  text-align: center;
  color: #aaa;
  background: #f0f0f0;
  border: 1px solid #bbb;
  border-radius: 2px;
}
.chk.dbl {
  background: #fff;
  box-shadow: inset 0 0 0 2px #fff, inset 0 0 0 3px #ccc;
}
.chk.big {
  background: #fff;
  border-color: #888;
}
.display-bottom {
  display: flex;
  align-items: center;
  gap: 3px;
  height: 40px;
  padding-left: 0;
  border-top: 1px solid #c8c8c8;
}

/* estado */
.status {
  display: flex;
  align-items: center;
  height: 31px;
  line-height: 12px;
  background: #fcfcfc;
  white-space: nowrap;
}
.st {
  flex: none;
  position: relative;
  top: -1px;
  letter-spacing: .5px;
}
.st-xy { width: 264px; padding-left: 2px; }
.st-h { width: 83px; }
.st-e { width: 134px; }
.st-c { width: 103px; }
.st-btn {
  display: flex;
  align-items: center;
  justify-content: center;
  flex: none;
  height: 24px;
  margin-right: 4px;
  background: #fff;
  border: 1px solid #bcbcbc;
  border-radius: 3px;
}
.st-btn .caret {
  margin-left: 3px;
  border-top-color: #444;
}
.st-btn.on {
  background: #d6e6fa;
  border-color: #6aa5ea;
}
.w22 { width: 22px; }
.w23 { width: 23px; }
.w24 { width: 24px; }
.w35 { width: 35px; }
.mr6 { margin-right: 6px; }
.mr7 { margin-right: 7px; }
.mr8 { margin-right: 8px; }
.ic-s {
  flex: none;
  width: 16px;
  height: 16px;
  stroke: #555;
}
.st-hint {
  position: relative;
  top: -1px;
  margin-left: 3px;
}

/* barra de tareas */
.taskbar {
  display: flex;
  height: 23px;
  overflow: hidden;
  background: linear-gradient(90deg, #dfe6dc 0, #e2e4da 30%, #ebe3d8 60%, #e9e2d8 88%, #e4e8e8 100%);
}
.task {
  flex: none;
  display: flex;
  justify-content: center;
  width: 49px;
  padding-top: 8px;
}
.task.on {
  background: #eef1ef;
}
.ti {
  flex: none;
  width: 22px;
  height: 22px;
  stroke: none;
}
.ti-t {
  font-size: 7px;
  font-weight: 700;
  fill: #fff;
  text-anchor: middle;
}
.tray {
  display: flex;
  gap: 6px;
  margin-left: auto;
  padding: 12px 7px 0 0;
}
.tray .ti {
  width: 18px;
  height: 18px;
}

/* aviso */
.tip {
  position: absolute;
  top: 13px;
  right: 0;
  width: 74px;
  height: 78px;
  padding: 7px 0 0 11px;
  overflow: hidden;
  white-space: nowrap;
  color: #fff;
  background: #4fa3ea;
  border-radius: 4px 0 0 4px;
}
.tip p {
  margin: 0;
  line-height: 19px;
}
.tip-btn {
  display: block;
  width: 53px;
  height: 18px;
  line-height: 18px;
  margin-top: 5px;
  text-align: center;
  color: #4fa3ea;
  background: #ddecfb;
  border-radius: 2px;
}
```
